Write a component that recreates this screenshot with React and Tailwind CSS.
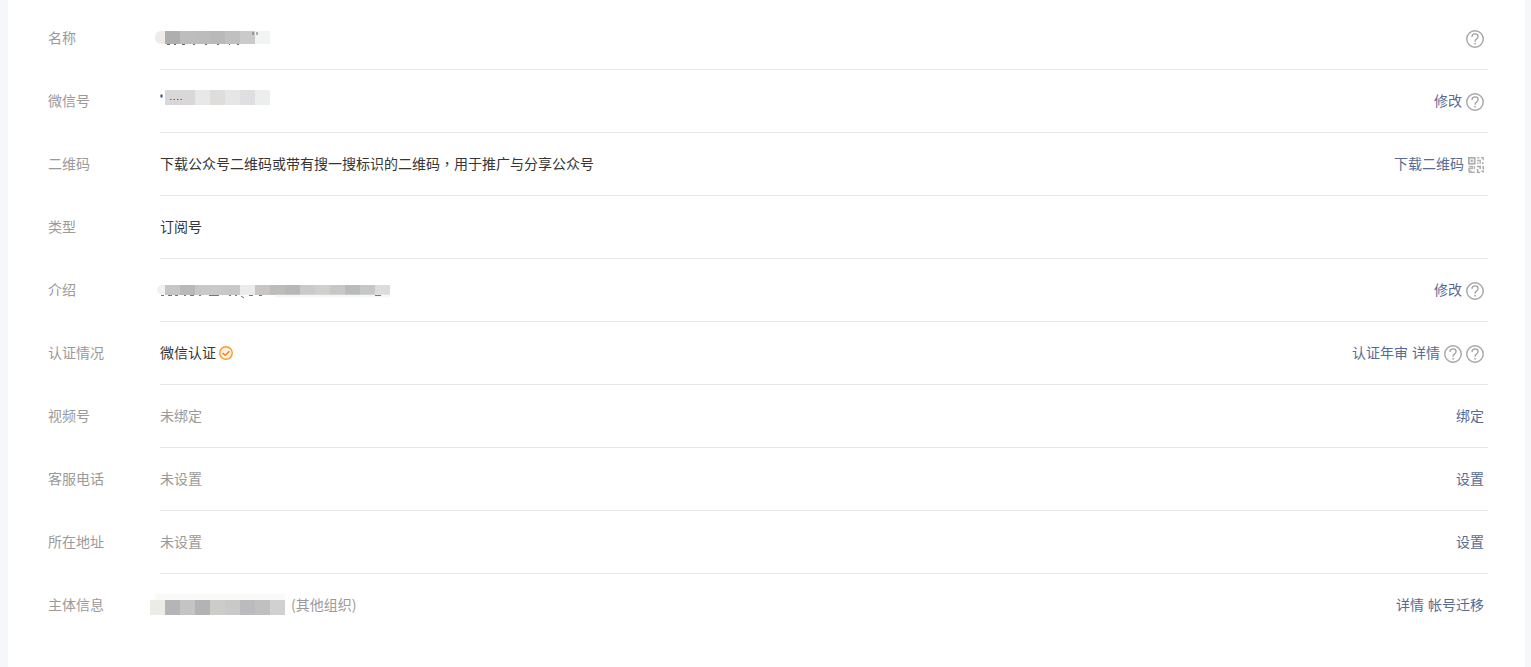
function Help() {
  return (
    <svg width="18" height="18" viewBox="0 0 18 18" fill="none" className="mt-[2px] shrink-0">
      <circle cx="9" cy="9" r="8.25" stroke="#a6a6a6" strokeWidth="1.4" />
      <path d="M5.9 6.9C6 5.1 7.3 3.9 9 3.9c1.8 0 3.1 1.1 3.1 2.7 0 1.3-.8 1.9-1.6 2.5-.9.6-1.4 1.2-1.4 2.2v.5" stroke="#a0a0a0" strokeWidth="1.3" />
      <rect x="8.3" y="13" width="1.5" height="1.5" fill="#a0a0a0" />
    </svg>
  );
}

function QrIcon() {
  return (
    <svg width="16" height="16" viewBox="0 0 16 16" fill="none" className="mt-[2px] shrink-0">
      <rect x="0.8" y="0.8" width="6" height="6" fill="#f1f1f1" stroke="#a8a8a8" strokeWidth="1.5" />
      <rect x="2.8" y="2.8" width="2" height="2" fill="#a8a8a8" />
      <path d="M9 .8h2.5M13 .8h2.2v2.4M9 3.4h3.2v3.4M14.8 5v2.2M9 6.2h1.5" stroke="#b4b4b4" strokeWidth="1.5" />
      <path d="M.8 9.4h3.4v2.2H1v2.6h2.6M6.4 9v3M.8 15.3h6" stroke="#b4b4b4" strokeWidth="1.5" />
      <path d="M9 9.4h3.2v2.6M15.2 9v3.4M9.6 12v3.4h2.6M13.4 14.2h2v1.4" stroke="#a8a8a8" strokeWidth="1.5" />
    </svg>
  );
}

function Check() {
  return (
    <svg width="14" height="14" viewBox="0 0 14 14" fill="none" className="shrink-0">
      <circle cx="7" cy="7" r="6.25" fill="#fdf1dd" stroke="#f79a2e" strokeWidth="1.4" />
      <path d="M3.6 7l2.5 2.4 4.3-4.2" stroke="#ef7a1c" strokeWidth="1.4" />
    </svg>
  );
}

function Link({ children, low }) {
  return <span className={`whitespace-nowrap text-[#576b95] ${low ? "pb-[3px]" : "pb-[2px]"}`}>{children}</span>;
}

function Row({ label, children, right, last }) {
  return (
    <div className="flex h-[63px] items-center">
      <div className="w-[112px] shrink-0 pb-[3px] text-[#9a9a9a]">{label}</div>
      <div className={`flex h-full min-w-0 flex-1 items-center justify-between pr-1 ${last ? "" : "border-b border-[#e7e7eb]"}`}>
        <div className="flex min-w-0 items-center">{children}</div>
        <div className="flex items-center gap-1">{right}</div>
      </div>
    </div>
  );
}

function Mosaic({ colors, h = "h-[15px]", lead, tail }) {
  return (
    <div className="flex">
      {lead}
      {colors.map((c, i) => (
        <span key={i} className={`block w-[15px] ${h} ${c}`} />
      ))}
      {tail}
    </div>
  );
}

function Val({ children, muted }) {
  return <span className={`pb-[2px] ${muted ? "text-[#9a9a9a]" : ""}`}>{children}</span>;
}

export default function App() {
  return (
    <div className="min-h-[667px] bg-[#f6f7f9] pl-[8px] pr-[6px] text-[14px] leading-5 text-[#353535] [font-family:'Noto_Sans_CJK_SC','Liberation_Sans',sans-serif]">
      <div className="h-[667px] bg-white pl-[40px] pr-[37px] pt-[7px]">
        <Row label="名称" right={<Help />}>
          <div className="relative -ml-[5px] -mt-[1px]">
            <Mosaic
              h="h-[13px]"
              lead={<span className="block h-[13px] w-[10px] rounded-l-md bg-[#eeebe8]" />}
              colors={["bg-[#aeaeae]", "bg-[#bdbdbd]", "bg-[#bcbcbc]", "bg-[#b9b9b9]", "bg-[#c0c0c0]", "bg-[#cacaca]", "bg-[#f2f3f3]"]}
            />
            <svg width="115" height="16" viewBox="0 0 115 16" className="absolute left-0 top-0">
              <path d="M12 13.5h3M19 13.5h2M27 13.5h3M38 13.5h2M50 13.5h2M62 13.5h2M74 13.5h1M82 13.5h2" stroke="#666" strokeWidth="1" />
              <path d="M98 1v3M102 1v3" stroke="#667" strokeWidth="1" />
            </svg>
          </div>
        </Row>
        <Row label="微信号" right={<><Link>修改</Link><Help /></>}>
          <div className="relative -mt-[8px] ml-[5px]">
            <Mosaic colors={["bg-[#d9d7d7]", "bg-[#d9d7d7]", "bg-[#e8e8e8]", "bg-[#dfdddc]", "bg-[#e6e6e6]", "bg-[#dfdfe1]", "bg-[#eceded]"]} />
            <svg width="30" height="15" viewBox="0 0 30 15" className="absolute -left-[5px] top-0 overflow-visible">
              <path d="M1.5 4.5v3" stroke="#2d4a78" strokeWidth="2" />
              <path d="M10 9.5h1.4M13.5 9.5h1.4M17 9.5h1.4M20.5 9.5h1.4" stroke="#6b5560" strokeWidth="1" />
            </svg>
          </div>
        </Row>
        <Row label="二维码" right={<><Link>下载二维码</Link><QrIcon /></>}>
          <Val>
            下载公众号二维码或带有搜一搜标识的二维码
            <span className="[font-family:'Noto_Sans_CJK_TC',sans-serif]">，</span>
            用于推广与分享公众号
          </Val>
        </Row>
        <Row label="类型"><Val>订阅号</Val></Row>
        <Row label="介绍" right={<><Link>修改</Link><Help /></>}>
          <div className="relative -ml-[3px]">
            <Mosaic
              h="h-[10px]"
              lead={<span className="block h-[10px] w-[8px] rounded-l-md bg-[#f1f1f0]" />}
              colors={["bg-[#c6c6c6]", "bg-[#b9b9b9]", "bg-[#c8c8c8]", "bg-[#c9c9c9]", "bg-[#c8c8c8]", "bg-[#ebebec]", "bg-[#c8c5c2]", "bg-[#bcbdb8]", "bg-[#b7b7b8]", "bg-[#cacaca]", "bg-[#cfcfcc]", "bg-[#c7c7c7]", "bg-[#b8bbbb]", "bg-[#c6c6c6]", "bg-[#dcdcdf]"]}
            />
            <svg width="233" height="14" viewBox="0 0 233 14" className="absolute left-0 top-0">
              <path d="M118 11h115" stroke="#f6f6f6" strokeWidth="2.4" />
              <path d="M4 10.5h3M11 10.5h4M18 10.5h3M27 10.5h2M33 10.5h4M42 10.5h2M52 10.5h10M72 10.5h2M78 10.5h2M92 10.5h4M102 10.5h3M218 10.5h6" stroke="#77777c" strokeWidth="1" />
              <path d="M84 11l3 2" stroke="#2a86c8" strokeWidth="1" />
            </svg>
          </div>
        </Row>
        <Row label="认证情况" right={<><Link>认证年审</Link><Link>详情</Link><Help /><Help /></>}>
          <Val>微信认证</Val>
          <span className="ml-[3px]"><Check /></span>
        </Row>
        <Row label="视频号" right={<Link>绑定</Link>}>
          <Val muted>未绑定</Val>
        </Row>
        <Row label="客服电话" right={<Link>设置</Link>}>
          <Val muted>未设置</Val>
        </Row>
        <Row label="所在地址" right={<Link>设置</Link>}>
          <Val muted>未设置</Val>
        </Row>
        <Row label="主体信息" last right={<><Link low>详情</Link><Link low>帐号迁移</Link></>}>
          <div className="relative -ml-[10px] mb-[3px] flex flex-col">
            <span className="ml-[5px] block h-[6px] w-[130px] bg-[#f9f9f8]" />
            <Mosaic
              lead={<span className="block h-[15px] w-[15px] bg-[#ecebe8]" />}
              colors={["bg-[#b5b5b7]", "bg-[#c5c3c3]", "bg-[#b2b3b4]", "bg-[#cdccc8]", "bg-[#c9c9ca]", "bg-[#bbbbbe]", "bg-[#c0c0c0]", "bg-[#d0d1d0]"]}
            />
          </div>
          <span className="ml-[6px] pb-[3px] text-[#9a9a9a]">(其他组织)</span>
        </Row>
      </div>
    </div>
  );
}
